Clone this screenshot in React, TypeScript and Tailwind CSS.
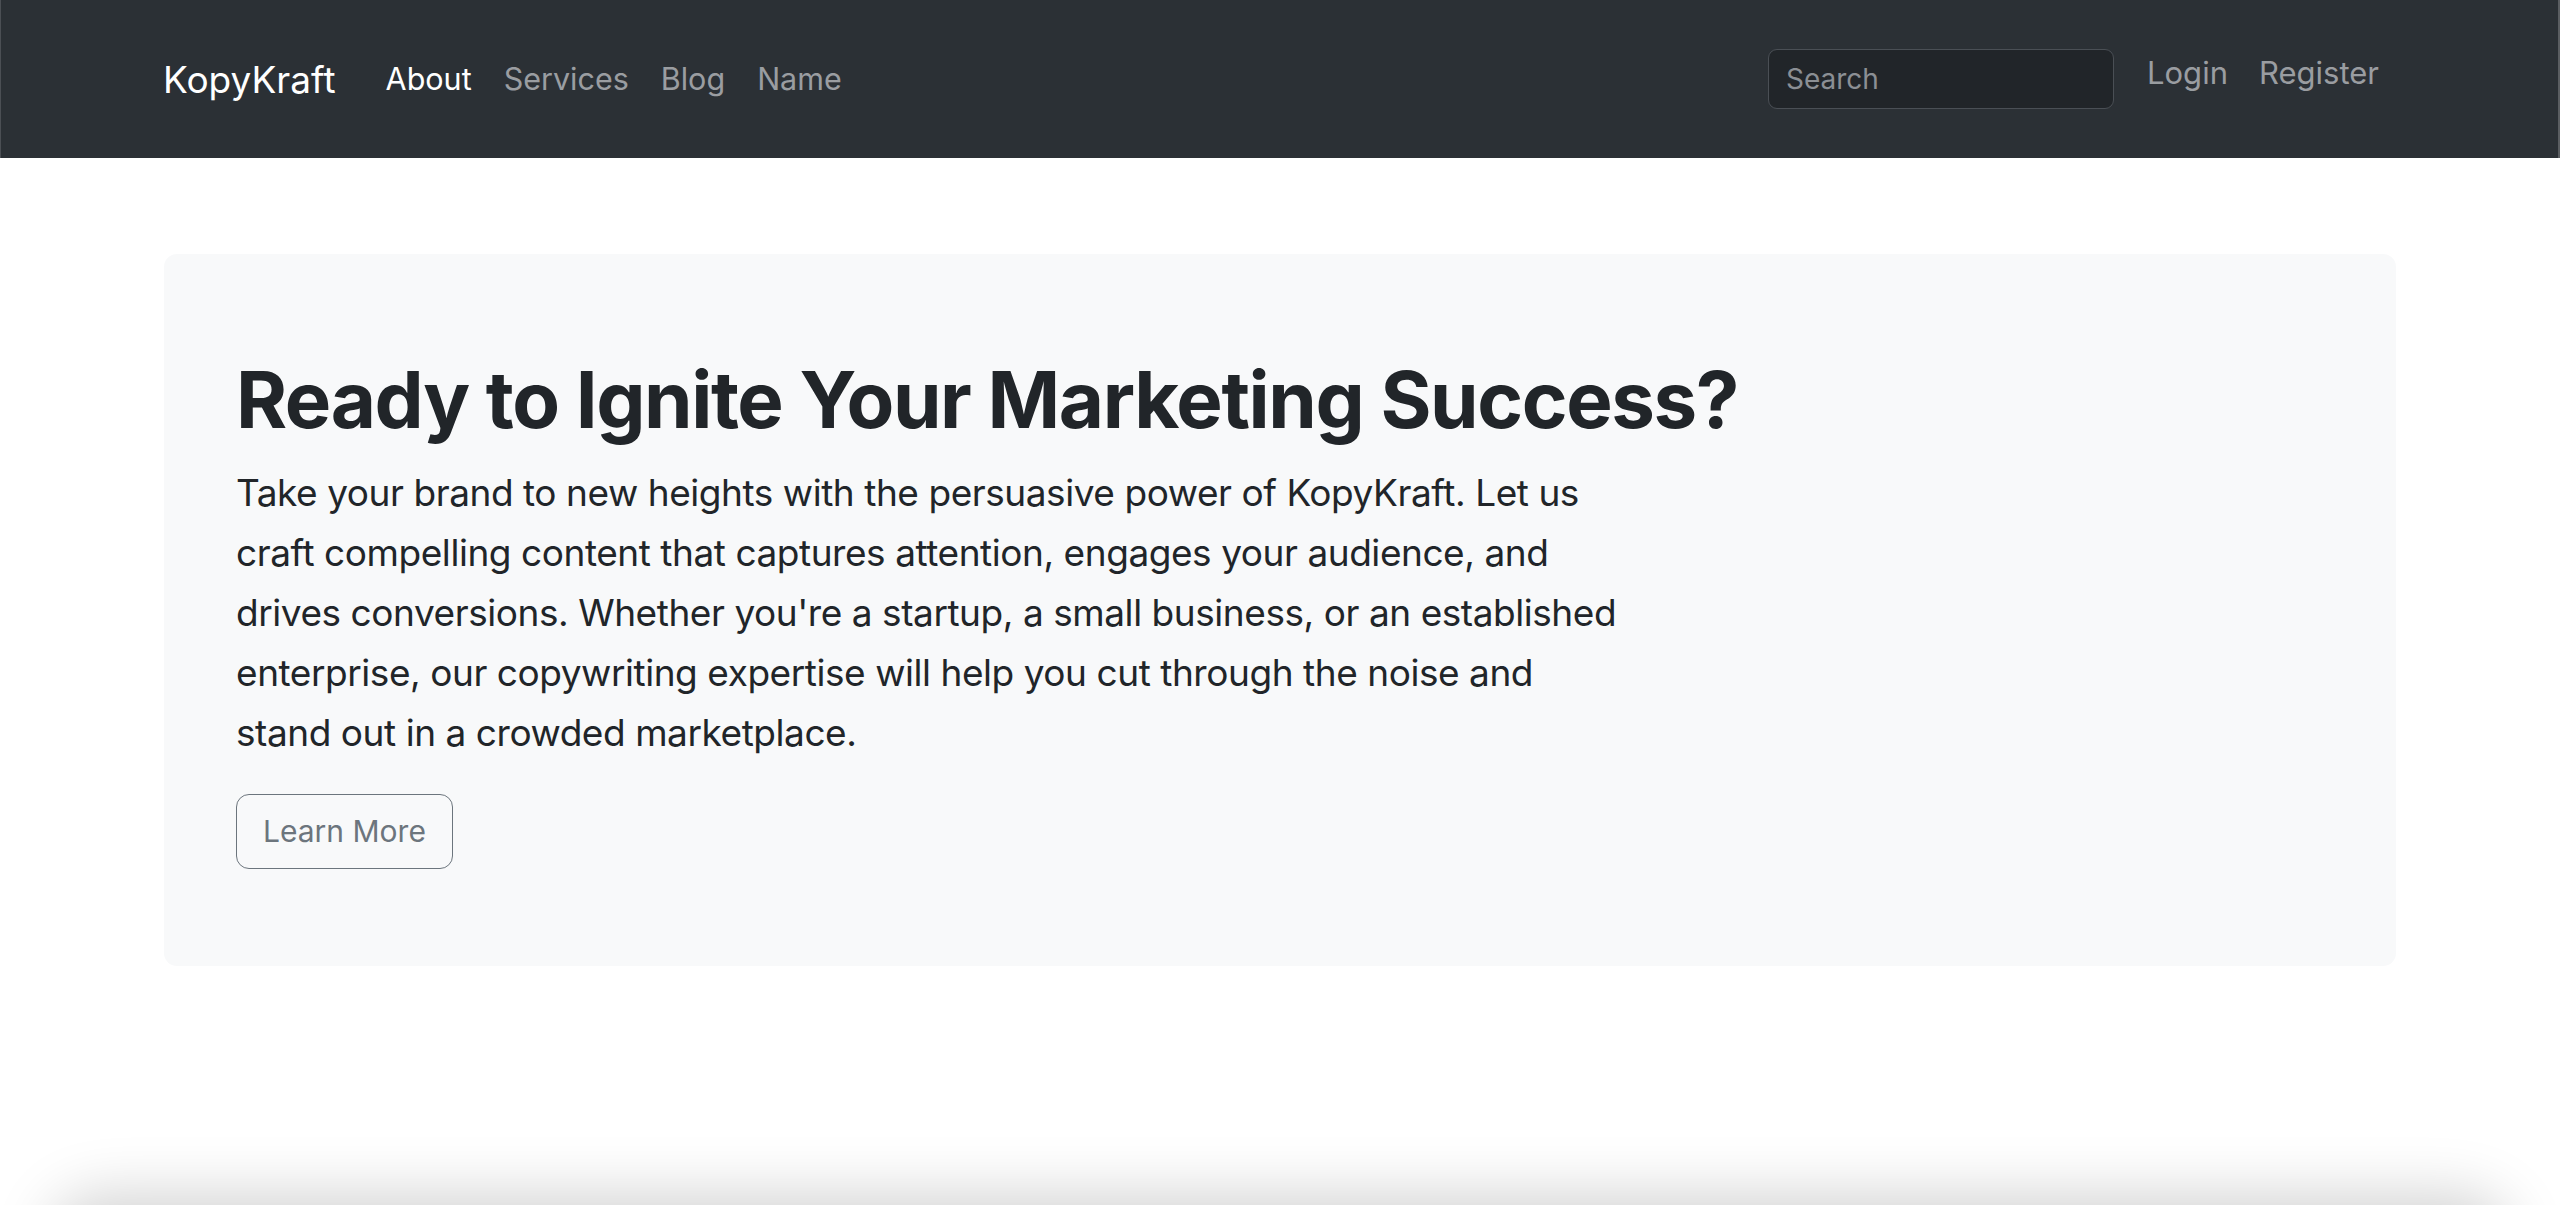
import * as React from 'react';

const navLinks = [
  { label: 'About', active: true },
  { label: 'Services', active: false },
  { label: 'Blog', active: false },
  { label: 'Name', active: false },
];

function Navbar() {
  return (
    <header className="h-[158px] shrink-0 bg-[#2b3035] flex items-center border-l border-[#4b4f54] border-r-2 border-r-[#5a5d61]">
      <div className="w-full pl-[162px] pr-[179px] flex items-center justify-between">
        <div className="flex items-center">
          <a href="#" className="text-[37px] leading-none text-white mr-[50px]">
            KopyKraft
          </a>
          <nav className="flex items-center gap-[32px] text-[30.5px] leading-none">
            {navLinks.map((link) => (
              <a
                key={link.label}
                href="#"
                className={link.active ? 'text-white' : 'text-[#9a9da1]'}
              >
                {link.label}
              </a>
            ))}
          </nav>
        </div>

        <div className="flex items-center">
          {/* Search */}
          <input
            type="text"
            placeholder="Search"
            className="w-[346px] h-[60px] rounded-[9px] bg-[#212529] border-[1.5px] border-[#4a4f55] px-[17px] text-[28px] text-[#dee2e6] placeholder:text-[#8b8f94] outline-none"
          />
          <div className="flex items-center gap-[31px] ml-[33px] mb-[13px] text-[31px] leading-none text-[#9a9da1]">
            <a href="#">Login</a>
            <a href="#">Register</a>
          </div>
        </div>
      </div>
    </header>
  );
}

function Hero() {
  return (
    <section className="mx-[164px] mt-[96px] h-[712px] rounded-[13px] bg-[#f8f9fa] pl-[72px] pt-[98px]">
      <h1 className="text-[78px] leading-[96px] font-bold tracking-[-0.018em] text-[#212529]">
        Ready to Ignite Your Marketing Success?
      </h1>
      <p className="mt-[15px] text-[37px] leading-[60px] tracking-[-0.012em] text-[#212529] whitespace-nowrap">
        Take your brand to new heights with the persuasive power of KopyKraft. Let us
        <br />
        craft compelling content that captures attention, engages your audience, and
        <br />
        drives conversions. Whether you're a startup, a small business, or an established
        <br />
        enterprise, our copywriting expertise will help you cut through the noise and
        <br />
        stand out in a crowded marketplace.
      </p>
      <button
        type="button"
        className="mt-[31px] h-[75px] px-[26px] rounded-[13px] border-[1.5px] border-[#6c757d] text-[30px] text-[#6c757d]"
      >
        Learn More
      </button>
    </section>
  );
}

export default function App() {
  return (
    <div className="h-[1205px] flex flex-col bg-white overflow-hidden font-['Inter','Liberation_Sans',sans-serif]">
      <Navbar />
      <main className="flex-1">
        <Hero />
      </main>
      {/* window shadow along the bottom edge */}
      <div className="h-[70px] shrink-0 overflow-hidden">
        <div className="mt-[70px] mx-[60px] h-[200px] rounded-[40px] shadow-[0_0_60px_10px_rgba(0,0,0,0.18)]" />
      </div>
    </div>
  );
}
